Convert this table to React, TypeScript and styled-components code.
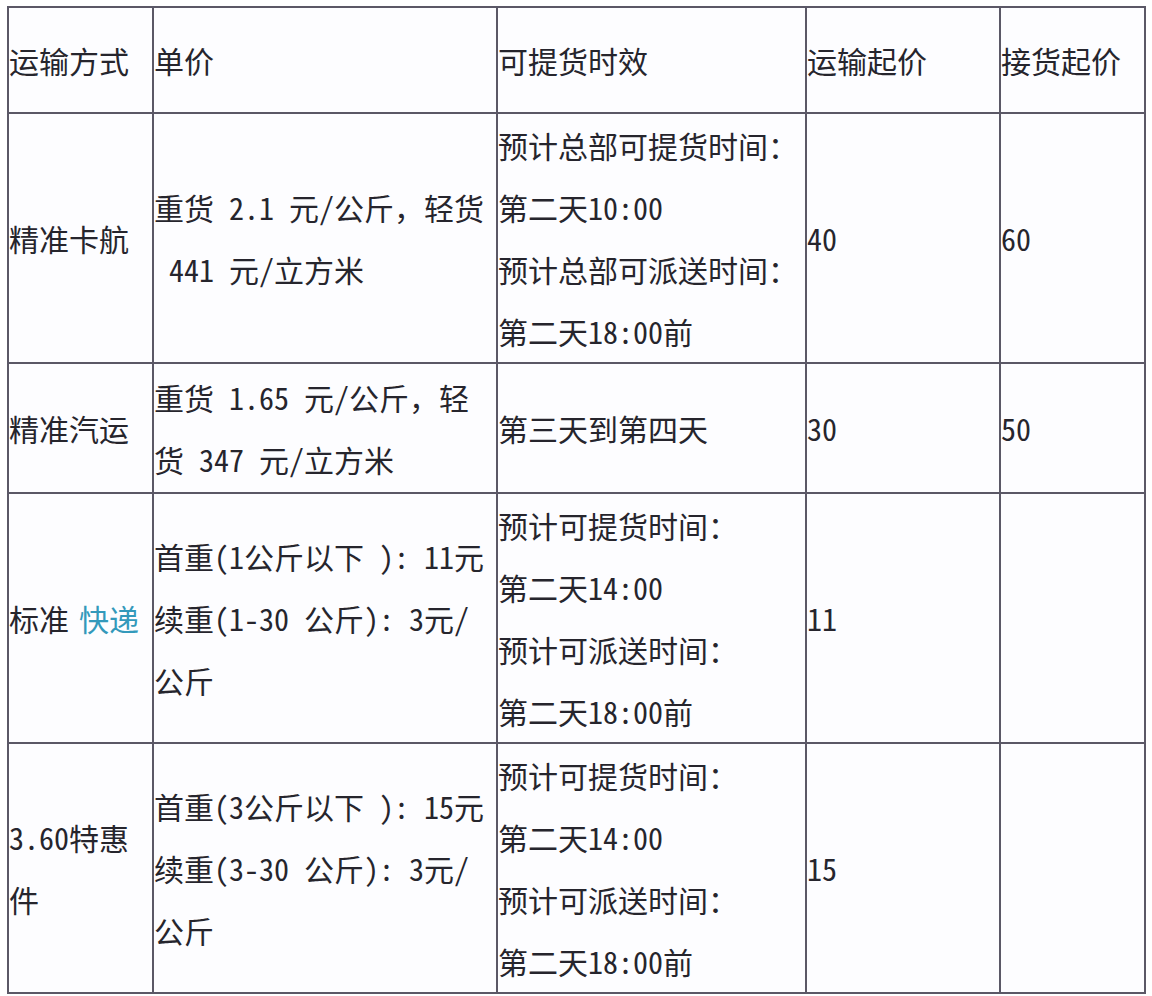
import React from "react";
import styled, { createGlobalStyle } from "styled-components";

const GlobalStyle = createGlobalStyle`
	body {
		margin: 0;
		background: #ffffff;
	}
`;

const Page = styled.div`
	padding: 6px 0 0 7px;
`;

const Table = styled.table`
	border-collapse: collapse;
	table-layout: fixed;
	width: 1137px;
	color: #26252d;
	font-family: "Noto Sans Mono CJK SC", "Noto Sans CJK SC", sans-serif;
	font-size: 30px;
	line-height: 62px;
	background: #fdfdff;
`;

const Row = styled.tr<{ $height: number }>`
	height: ${({ $height }) => $height}px;
`;

const Cell = styled.td`
	border: 2px solid #5b5866;
	padding: 0;
	vertical-align: middle;
	white-space: pre;
	overflow: visible;
`;

const Line = styled.span`
	display: block;
`;

const Accent = styled.span`
	color: #3399bb;
	margin-left: 10px;
	font-weight: 500;
`;

type RowData = {
	height: number;
	cells: React.ReactNode[][];
};

const rows: RowData[] = [
	{
		height: 106,
		cells: [["运输方式"], ["单价"], ["可提货时效"], ["运输起价"], ["接货起价"]],
	},
	{
		height: 250,
		cells: [
			["精准卡航"],
			["重货 2.1 元/公斤，轻货", " 441 元/立方米"],
			["预计总部可提货时间：", "第二天10:00", "预计总部可派送时间：", "第二天18:00前"],
			["40"],
			["60"],
		],
	},
	{
		height: 130,
		cells: [
			["精准汽运"],
			["重货 1.65 元/公斤，轻", "货 347 元/立方米"],
			["第三天到第四天"],
			["30"],
			["50"],
		],
	},
	{
		height: 250,
		cells: [
			[
				<>
					标准<Accent>快递</Accent>
				</>,
			],
			["首重(1公斤以下 ): 11元", "续重(1-30 公斤): 3元/", "公斤"],
			["预计可提货时间：", "第二天14:00", "预计可派送时间：", "第二天18:00前"],
			["11"],
			[""],
		],
	},
	{
		height: 249,
		cells: [
			["3.60特惠", "件"],
			["首重(3公斤以下 ): 15元", "续重(3-30 公斤): 3元/", "公斤"],
			["预计可提货时间：", "第二天14:00", "预计可派送时间：", "第二天18:00前"],
			["15"],
			[""],
		],
	},
];

const columnWidths = [145, 344, 309, 194, 145];

const App = (): JSX.Element => {
	return (
		<Page>
			<GlobalStyle />
			<Table>
				<colgroup>
					{columnWidths.map((w, i) => (
						<col key={i} width={w} />
					))}
				</colgroup>
				<tbody>
					{rows.map((row, r) => (
						<Row key={r} $height={row.height}>
							{row.cells.map((lines, c) => (
								<Cell key={c}>
									{lines.map((line, l) => (
										<Line key={l}>{line}</Line>
									))}
								</Cell>
							))}
						</Row>
					))}
				</tbody>
			</Table>
		</Page>
	);
};

export default App;
